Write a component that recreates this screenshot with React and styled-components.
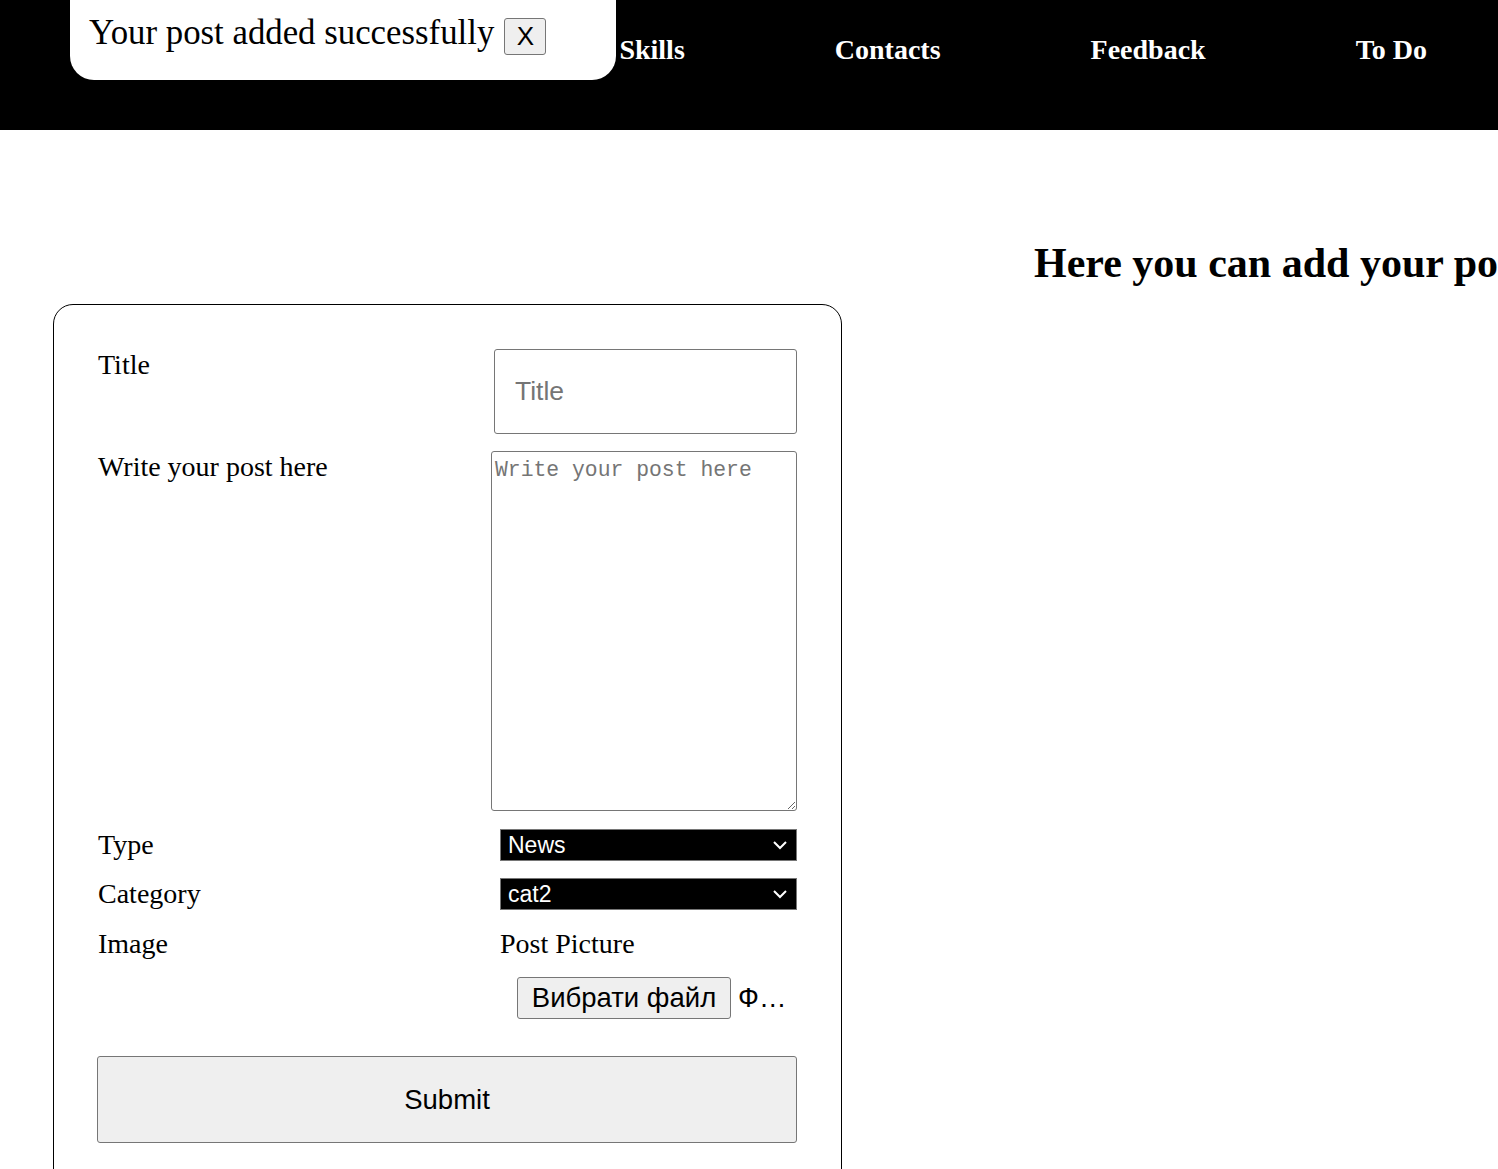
import styled, { createGlobalStyle } from "styled-components";

const GlobalStyle = createGlobalStyle`
    html, body {
        margin: 0;
        padding: 0;
        background: #FFFFFF;
        overflow: hidden;
        font-family: 'Liberation Serif', 'Times New Roman', serif;
    }
`

export default function App(){
    return(
        <Page>
            <GlobalStyle />
            <Header>
                <Nav>
                    <NavItem>Skills</NavItem>
                    <NavItem>Contacts</NavItem>
                    <NavItem>Feedback</NavItem>
                    <NavItem>To Do</NavItem>
                </Nav>
                <Toast>
                    <ToastText>Your post added successfully</ToastText>
                    <CloseButton>X</CloseButton>
                </Toast>
            </Header>
            <Main>
                <Card>
                    <Row>
                        <Label>Title</Label>
                        <TitleInput placeholder="Title" />
                    </Row>
                    <Row gap={17}>
                        <Label>Write your post here</Label>
                        <PostArea placeholder="Write your post here" />
                    </Row>
                    <Row gap={18}>
                        <Label>Type</Label>
                        <Select>
                            <span>News</span>
                            <Chevron />
                        </Select>
                    </Row>
                    <Row gap={17}>
                        <Label>Category</Label>
                        <Select>
                            <span>cat2</span>
                            <Chevron />
                        </Select>
                    </Row>
                    <Row gap={18}>
                        <Label>Image</Label>
                        <PictureBox>
                            <PictureTitle>Post Picture</PictureTitle>
                            <FilePicker>
                                <FileButton>Вибрати файл</FileButton>
                                <FileName>Файл не вибрано</FileName>
                            </FilePicker>
                        </PictureBox>
                    </Row>
                    <Submit>Submit</Submit>
                </Card>
                <Heading>Here you can add your post</Heading>
            </Main>
        </Page>
    )
}

function Chevron(){
    return(
        <svg width="16" height="10" viewBox="0 0 16 10">
            <path d="M2 2 L8 8 L14 2" fill="none" stroke="#FFFFFF" strokeWidth="2" />
        </svg>
    )
}

const Page = styled.div`
    width: 1498px;
    min-height: 1169px;
    overflow: hidden;
`

const Header = styled.header`
    position: relative;
    background-color: #000000;
    height: 130px;
`

const Nav = styled.nav`
    display: flex;
    justify-content: flex-end;
    align-items: center;
    gap: 150px;
    height: 100px;
    padding-right: 71px;
`

const NavItem = styled.a`
    font-family: 'Liberation Serif', 'Times New Roman', serif;
    font-weight: 700;
    font-size: 28px;
    color: #FFFFFF;
`

const Toast = styled.div`
    position: absolute;
    left: 70px;
    top: -30px;
    width: 546px;
    height: 110px;
    box-sizing: border-box;
    padding: 46px 0 0 19px;
    background: #FFFFFF;
    border-radius: 24px;
    display: flex;
    align-items: flex-start;
    gap: 10px;
`

const ToastText = styled.span`
    font-size: 34.8px;
    line-height: 34px;
    color: #000000;
`

const CloseButton = styled.button`
    width: 42px;
    height: 37px;
    margin-top: 2px;
    background: #EFEFEF;
    border: 1px solid #767676;
    border-radius: 3px;
    font-family: 'Liberation Sans', Arial, sans-serif;
    font-size: 26px;
    color: #000000;
    padding: 0;
`

const Main = styled.main`
    display: flex;
    align-items: flex-start;
    padding-left: 53px;
    gap: 192px;
`

const Card = styled.section`
    flex: none;
    width: 789px;
    margin-top: 174px;
    height: 900px;
    box-sizing: border-box;
    border: 1px solid #000000;
    border-radius: 20px;
    padding: 44px 43px 0 44px;
    display: flex;
    flex-direction: column;
`

const Row = styled.div`
    display: grid;
    grid-template-columns: 393px 306px;
    margin-top: ${props => props.gap || 0}px;
`

const Label = styled.label`
    font-size: 28px;
    line-height: 32px;
    color: #000000;
`

const TitleInput = styled.input`
    margin-left: 3px;
    width: 303px;
    height: 85px;
    box-sizing: border-box;
    border: 1px solid #767676;
    border-radius: 3px;
    padding: 0 20px;
    font-family: 'Liberation Sans', Arial, sans-serif;
    font-size: 26.5px;
    &::placeholder { color: #757575; }
`

const PostArea = styled.textarea`
    width: 306px;
    height: 360px;
    box-sizing: border-box;
    border: 1px solid #767676;
    border-radius: 3px;
    padding: 6px 3px 2px;
    margin: 0;
    font-family: 'Liberation Mono', 'Courier New', monospace;
    font-size: 21.4px;
    &::placeholder { color: #757575; }
`

const Select = styled.div`
    margin-left: 9px;
    width: 297px;
    height: 32px;
    box-sizing: border-box;
    background: #000000;
    border: 1px solid #767676;
    color: #FFFFFF;
    font-family: 'Liberation Sans', Arial, sans-serif;
    font-size: 23px;
    display: flex;
    align-items: center;
    justify-content: space-between;
    padding: 0 8px 0 7px;
`

const PictureBox = styled.div`
    margin-left: 9px;
    display: flex;
    flex-direction: column;
`

const PictureTitle = styled.span`
    font-size: 28px;
    line-height: 32px;
`

const FilePicker = styled.div`
    margin: 17px 0 0 17px;
    display: flex;
    align-items: center;
    gap: 7px;
    width: 272px;
`

const FileButton = styled.button`
    flex: none;
    width: 214px;
    height: 42px;
    padding: 0;
    background: #EFEFEF;
    border: 1px solid #767676;
    border-radius: 3px;
    font-family: 'Liberation Sans', Arial, sans-serif;
    font-size: 27.5px;
    color: #000000;
`

const FileName = styled.span`
    font-family: 'Liberation Sans', Arial, sans-serif;
    font-size: 27.5px;
    white-space: nowrap;
    overflow: hidden;
    text-overflow: ellipsis;
    min-width: 0;
`

const Submit = styled.button`
    margin: 37px 0 0 -1px;
    width: 700px;
    height: 87px;
    background: #EFEFEF;
    border: 1px solid #767676;
    border-radius: 3px;
    font-family: 'Liberation Sans', Arial, sans-serif;
    font-size: 27.5px;
    color: #000000;
`

const Heading = styled.h1`
    flex: none;
    margin: 109px 0 0 0;
    font-size: 42px;
    font-weight: 700;
    white-space: nowrap;
`
